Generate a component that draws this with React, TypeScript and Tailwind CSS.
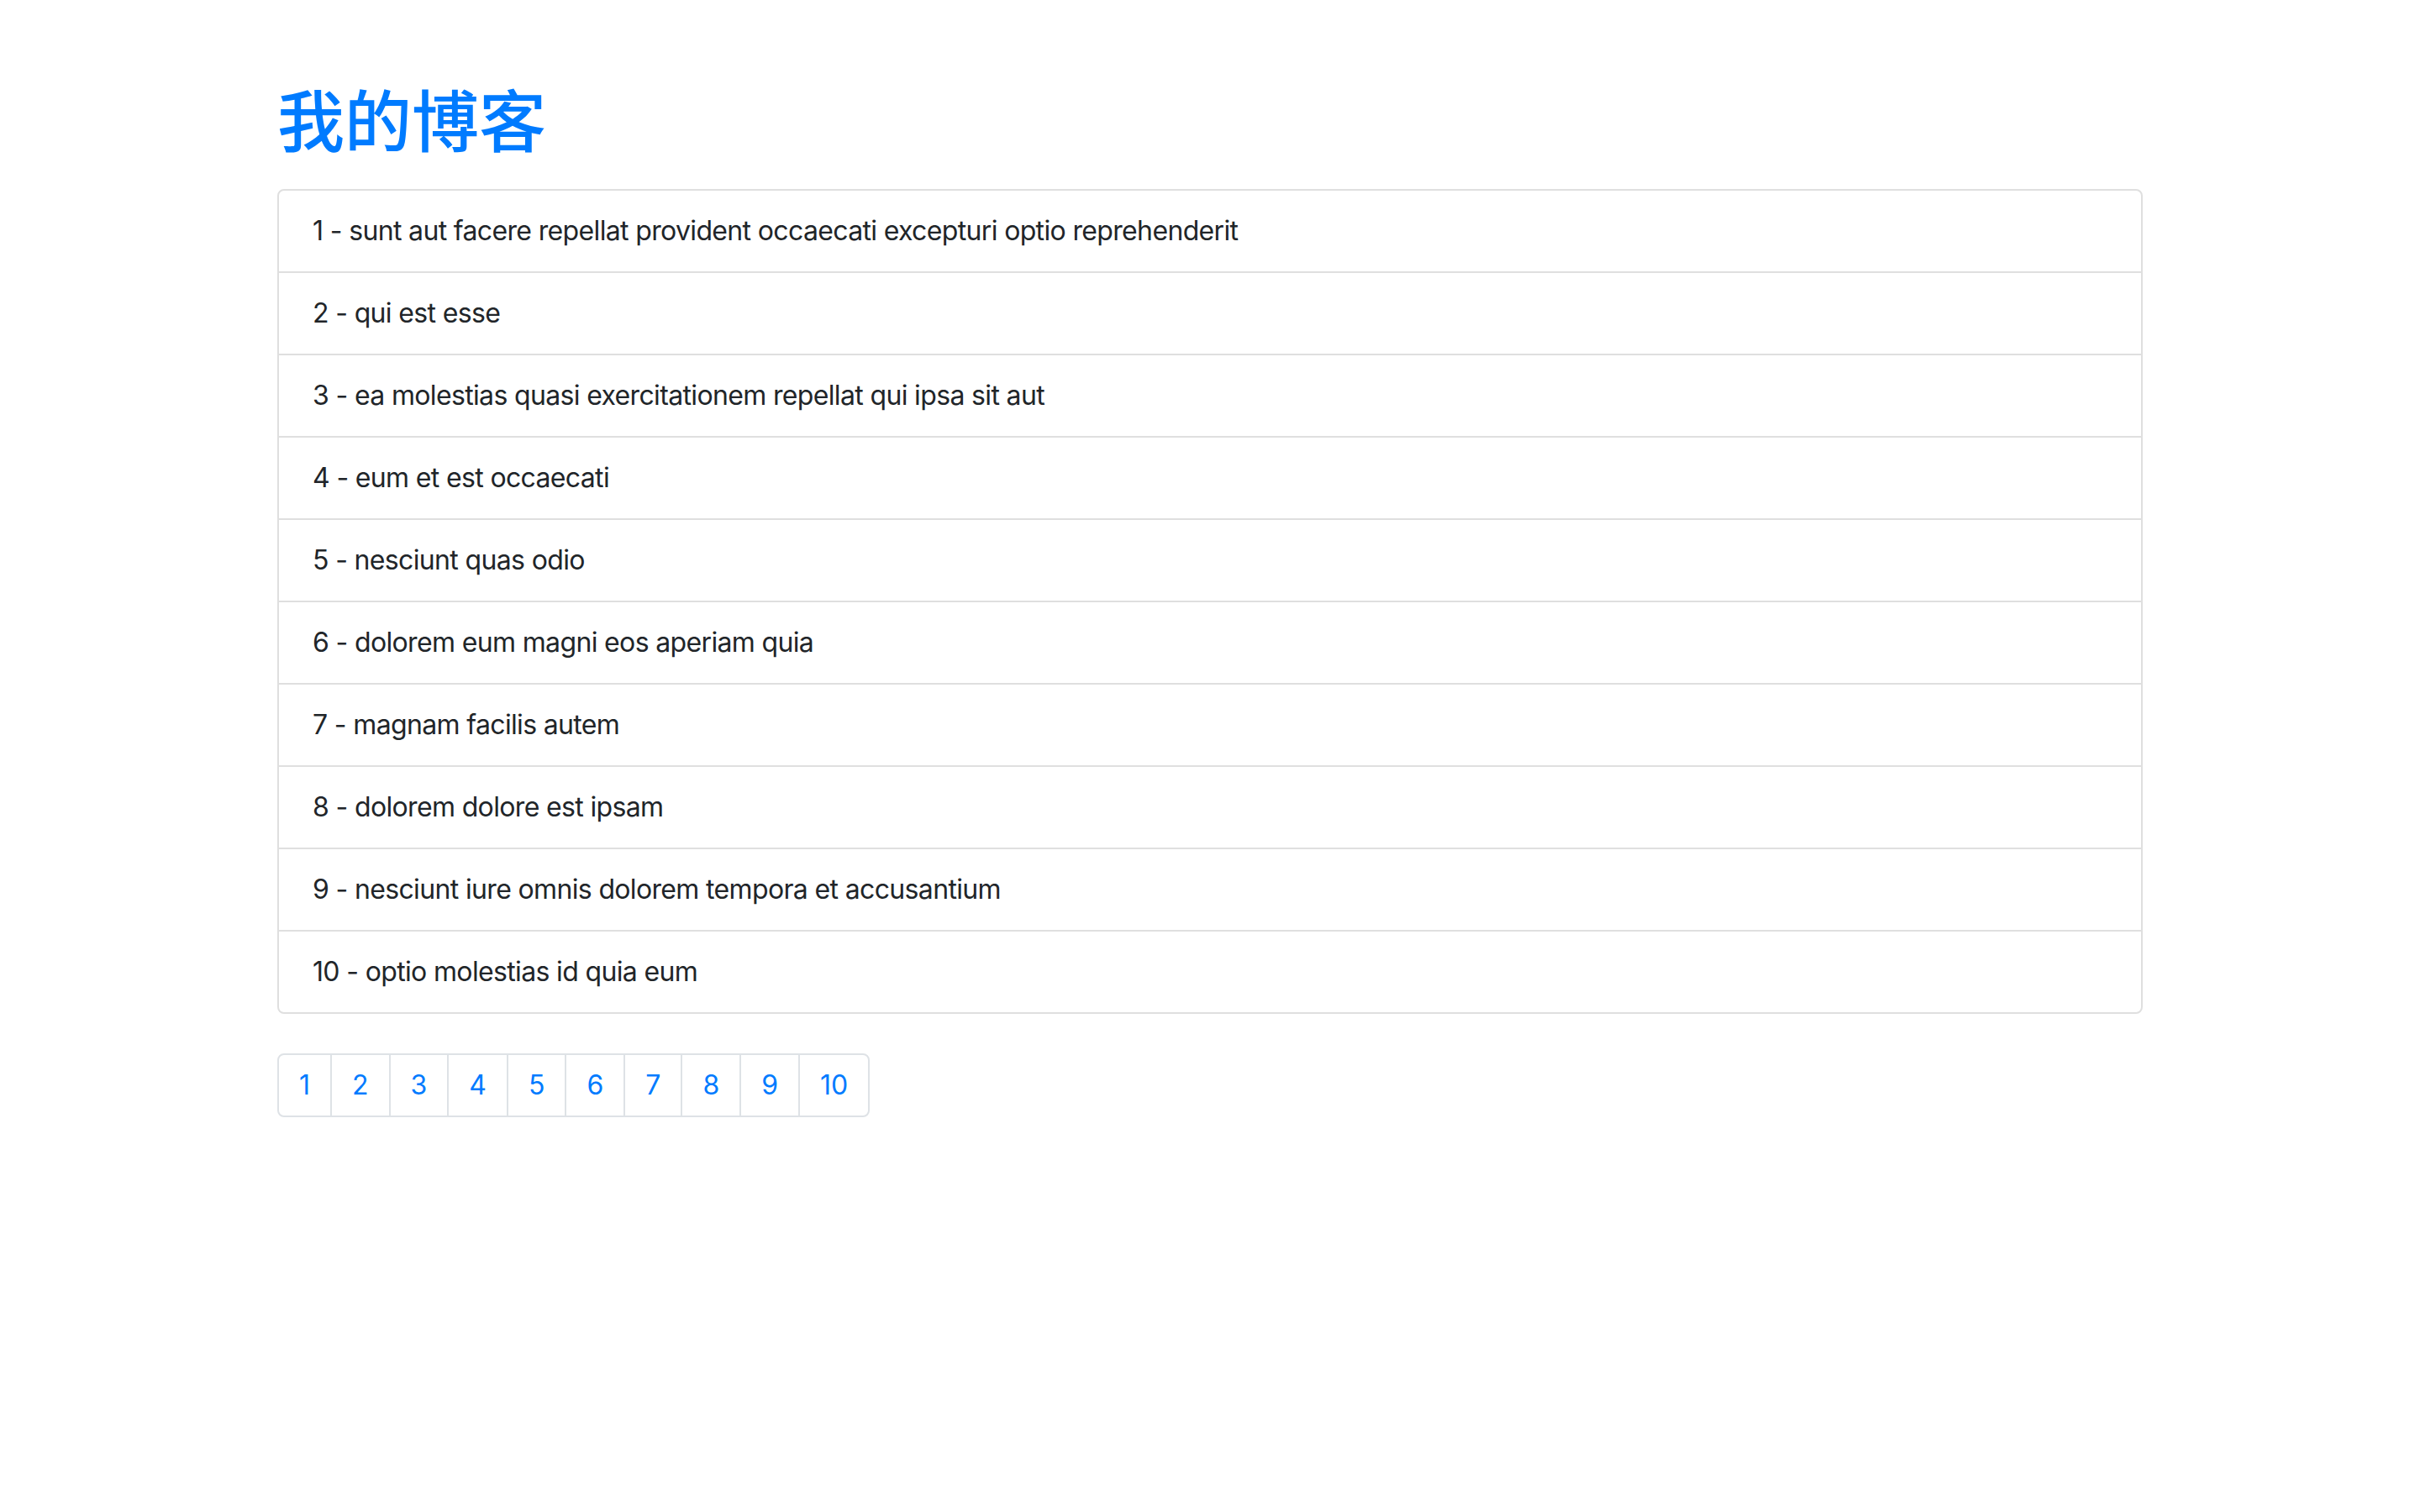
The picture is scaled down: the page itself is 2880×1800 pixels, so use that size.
import React from "react";

const posts = [
  "sunt aut facere repellat provident occaecati excepturi optio reprehenderit",
  "qui est esse",
  "ea molestias quasi exercitationem repellat qui ipsa sit aut",
  "eum et est occaecati",
  "nesciunt quas odio",
  "dolorem eum magni eos aperiam quia",
  "magnam facilis autem",
  "dolorem dolore est ipsam",
  "nesciunt iure omnis dolorem tempora et accusantium",
  "optio molestias id quia eum",
];

export default function App() {
  return (
    <div className="min-h-screen w-full bg-white text-[#212529] [font-family:Inter,'Noto_Sans',sans-serif]">
      <div className="mx-auto w-[2220px] pt-[91px]">
        <h1 className="mb-[38px] text-[80px] font-medium leading-[96px] text-[#007bff] [font-family:'Noto_Sans_CJK_SC',sans-serif]">
          我的博客
        </h1>
        <ul className="flex flex-col rounded-[8px] border-2 border-[#dfdfdf]">
          {posts.map((t, i) => (
            <li
              key={i}
              className={
                "px-[40px] py-[24px] text-[32px] leading-[48px] tracking-[-0.65px] " +
                (i > 0 ? "border-t-2 border-[#dfdfdf]" : "")
              }
            >
              {i + 1} - {t}
            </li>
          ))}
        </ul>
        <div className="mt-[47px] flex">
          <div className="flex rounded-[8px] border-2 border-[#dee2e6]">
            {Array.from({ length: 10 }, (_, i) => (
              <a
                key={i}
                href="#"
                className={
                  "block px-[24px] py-[16px] text-[32px] leading-[40px] text-[#007bff] " +
                  (i > 0 ? "border-l-2 border-[#dee2e6]" : "")
                }
              >
                {i + 1}
              </a>
            ))}
          </div>
        </div>
      </div>
    </div>
  );
}
